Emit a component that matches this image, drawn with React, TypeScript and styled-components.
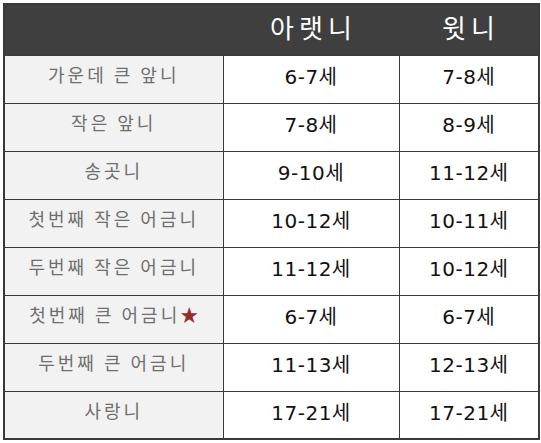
import styled, { createGlobalStyle } from 'styled-components'

const Global = createGlobalStyle`
  body {
    margin: 0;
    background: #ffffff;
    font-family: "Noto Sans CJK KR", "Noto Sans", sans-serif;
  }
`

const Wrap = styled.div`
  padding: 3px 0 0 3px;
`

const Table = styled.table`
  width: 535px;
  border-collapse: collapse;
  table-layout: fixed;
  border: 2px solid #3a3a3a;
`

const HeadRow = styled.tr`
  height: 51px;
  background: #3f3f3f;
`

const HeadCell = styled.th`
  color: #ffffff;
  font-weight: 400;
  font-size: 26px;
  letter-spacing: 5px;
  text-align: center;
  vertical-align: middle;
  padding: 0 0 6px 5px;
  line-height: 1;
`

const Row = styled.tr`
  height: 48px;
`

const NameCell = styled.td`
  background: #f2f2f2;
  color: #6f6f6f;
  font-size: 18px;
  letter-spacing: 3px;
  text-align: center;
  vertical-align: top;
  padding: 8px 0 0 0;
  border: 1px solid #3a3a3a;
  line-height: 1.2;
`

const ValueCell = styled.td`
  color: #111111;
  font-family: "DejaVu Sans", "Noto Sans CJK KR", sans-serif;
  font-size: 20px;
  letter-spacing: 0.5px;
  text-align: center;
  vertical-align: top;
  padding: 9px 0 0 0;
  border: 1px solid #3a3a3a;
  line-height: 1.2;
`

const Star = styled.span`
  color: #9a2b2b;
  letter-spacing: 0;
`

interface Tooth {
  name: string
  lower: string
  upper: string
  star?: boolean
}

const teeth: Tooth[] = [
  { name: '가운데 큰 앞니', lower: '6-7세', upper: '7-8세' },
  { name: '작은 앞니', lower: '7-8세', upper: '8-9세' },
  { name: '송곳니', lower: '9-10세', upper: '11-12세' },
  { name: '첫번째 작은 어금니', lower: '10-12세', upper: '10-11세' },
  { name: '두번째 작은 어금니', lower: '11-12세', upper: '10-12세' },
  { name: '첫번째 큰 어금니', lower: '6-7세', upper: '6-7세', star: true },
  { name: '두번째 큰 어금니', lower: '11-13세', upper: '12-13세' },
  { name: '사랑니', lower: '17-21세', upper: '17-21세' },
]

export default function App() {
  return (
    <Wrap>
      <Global />
      <Table>
        <colgroup>
          <col style={{ width: 219 }} />
          <col style={{ width: 176 }} />
          <col style={{ width: 140 }} />
        </colgroup>
        <thead>
          <HeadRow>
            <HeadCell />
            <HeadCell>아랫니</HeadCell>
            <HeadCell>윗니</HeadCell>
          </HeadRow>
        </thead>
        <tbody>
          {teeth.map(t => (
            <Row key={t.name}>
              <NameCell>
                {t.name}
                {t.star && <Star>★</Star>}
              </NameCell>
              <ValueCell>{t.lower}</ValueCell>
              <ValueCell>{t.upper}</ValueCell>
            </Row>
          ))}
        </tbody>
      </Table>
    </Wrap>
  )
}
